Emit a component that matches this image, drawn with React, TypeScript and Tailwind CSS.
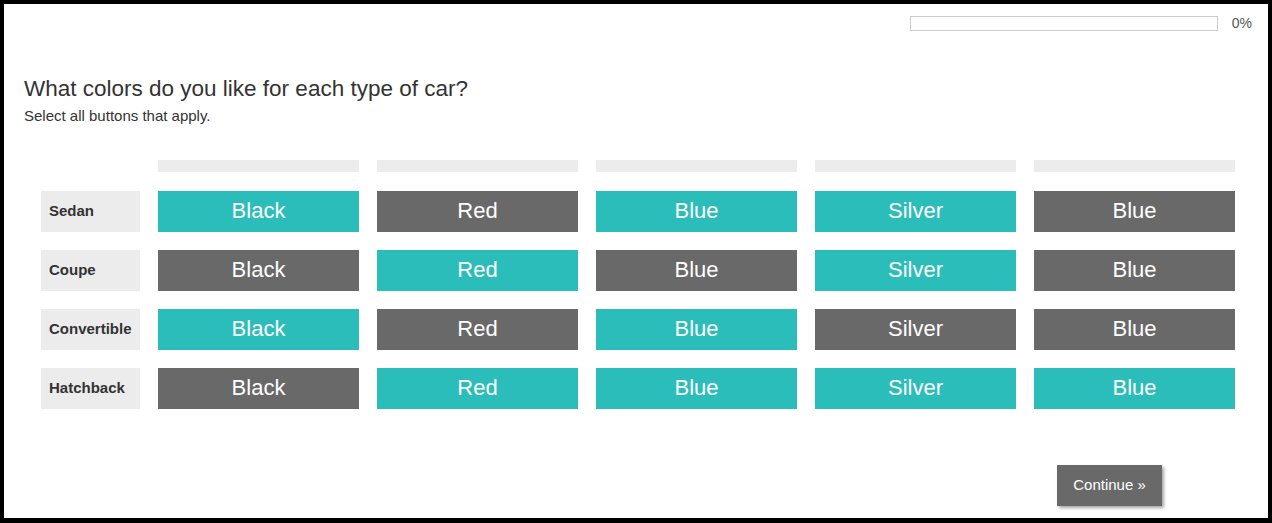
const COLS = ["Black", "Red", "Blue", "Silver", "Blue"];

// true = selected (teal)
const ROWS: { label: string; on: boolean[] }[] = [
  { label: "Sedan", on: [true, false, true, true, false] },
  { label: "Coupe", on: [false, true, false, true, false] },
  { label: "Convertible", on: [true, false, true, false, false] },
  { label: "Hatchback", on: [false, true, true, true, true] },
];

export default function App() {
  return (
    <div
      className="h-[523px] w-[1272px] border-4 border-b-[5px] border-black bg-white text-[#333]"
      style={{ fontFamily: '"Liberation Sans", Arial, sans-serif' }}
    >
      {/* progress */}
      <div className="flex items-center justify-end pt-[12px] pr-[16px]">
        <div className="h-[15px] w-[308px] border border-[#cccccc] bg-white" />
        <span className="ml-[14px] text-[14px] leading-[15px] text-[#555]">0%</span>
      </div>

      <div className="pl-[20px] pt-[45px]">
        <h1 className="text-[22.5px] leading-[26px] text-[#333]">What colors do you like for each type of car?</h1>
        <p className="mt-[5px] text-[15px] leading-[18px] text-[#333]">Select all buttons that apply.</p>
      </div>

      <div className="mt-[35px] ml-[37px] grid grid-cols-[99px_repeat(5,201px)] gap-x-[18px]">
        <div />
        {COLS.map((_, i) => (
          <div key={i} className="h-[12px] bg-[#ececec]" />
        ))}
      </div>

      <div className="mt-[19px] ml-[37px] flex flex-col gap-[18px]">
        {ROWS.map((r) => (
          <div key={r.label} className="grid grid-cols-[99px_repeat(5,201px)] gap-x-[18px]">
            <div className="flex h-[41px] items-center bg-[#ececec] pl-[8px] text-[15px] font-bold text-[#333]">
              {r.label}
            </div>
            {COLS.map((c, i) => (
              <button
                key={i}
                className={`h-[41px] pb-[2px] text-[22px] text-white ${r.on[i] ? "bg-[#2bbdb9]" : "bg-[#696969]"}`}
              >
                {c}
              </button>
            ))}
          </div>
        ))}
      </div>

      <div className="mt-[56px] flex justify-end pr-[106px]">
        <button className="h-[41px] w-[105px] bg-[#696969] text-[15px] text-white shadow-[2px_2px_3px_rgba(0,0,0,0.35)]">
          Continue »
        </button>
      </div>
    </div>
  );
}
